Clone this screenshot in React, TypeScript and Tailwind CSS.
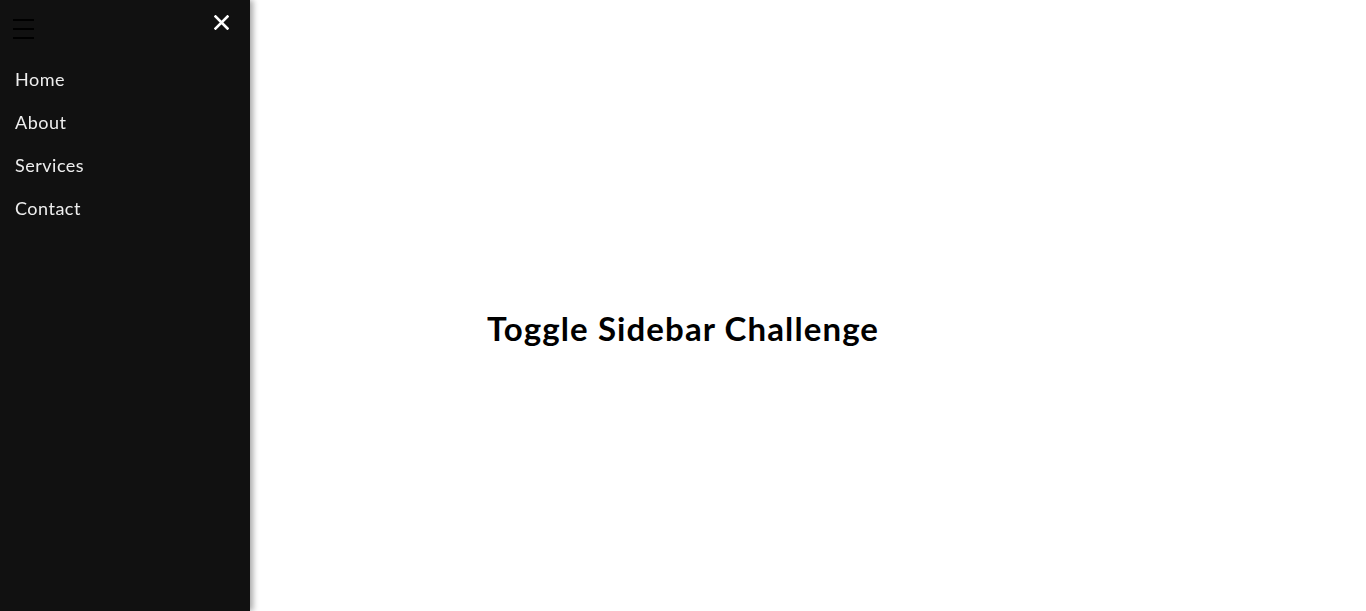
export default function App() {
  return (
    <div className="relative w-full h-[611px] bg-white overflow-hidden font-['Lato',sans-serif]">
      <aside className="fixed left-0 top-0 h-full w-[250px] bg-[#111111] shadow-[3px_0_6px_rgba(0,0,0,0.35)] z-10">
        <div className="flex items-start justify-between h-[58px]">
          <div className="flex flex-col gap-[7px] pt-[19px] pl-[13px]">
            <span className="block w-[21px] h-[2px] bg-black" />
            <span className="block w-[21px] h-[2px] bg-black" />
            <span className="block w-[21px] h-[2px] bg-black" />
          </div>
          <div className="pt-[15px] pr-[21px]">
            <svg width="15" height="15" viewBox="0 0 15 15">
              <path d="M1.5 1.5 L13.5 13.5 M13.5 1.5 L1.5 13.5" stroke="white" strokeWidth="2.6" strokeLinecap="square" />
            </svg>
          </div>
        </div>
        <nav className="flex flex-col">
          {["Home", "About", "Services", "Contact"].map((t) => (
            <a key={t} className="block pl-[15px] h-[43px] leading-[43px] text-[18px] tracking-[0.5px] text-[#eeeeee]">
              {t}
            </a>
          ))}
        </nav>
      </aside>
      <main className="flex items-center justify-center h-full pt-[46px]">
        <h1 className="text-[33px] tracking-[1.1px] font-bold text-black leading-none">Toggle Sidebar Challenge</h1>
      </main>
    </div>
  );
}
